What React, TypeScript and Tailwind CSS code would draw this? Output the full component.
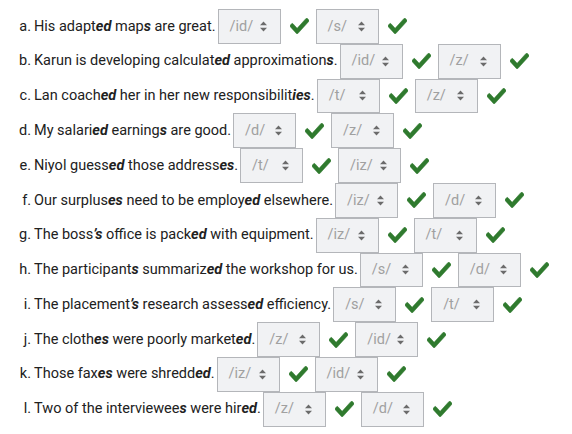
import React from 'react';

type Part = string | { b: string };

interface Row {
  id: string;
  parts: Part[];
  answers: [string, string];
}

const rows: Row[] = [
  { id: 'a', parts: ['His adapt', { b: 'ed' }, ' map', { b: 's' }, ' are great.'], answers: ['/id/', '/s/'] },
  { id: 'b', parts: ['Karun is developing calculat', { b: 'ed' }, ' approximation', { b: 's' }, '.'], answers: ['/id/', '/z/'] },
  { id: 'c', parts: ['Lan coach', { b: 'ed' }, ' her in her new responsibilit', { b: 'ies' }, '.'], answers: ['/t/', '/z/'] },
  { id: 'd', parts: ['My salari', { b: 'ed' }, ' earning', { b: 's' }, ' are good.'], answers: ['/d/', '/z/'] },
  { id: 'e', parts: ['Niyol guess', { b: 'ed' }, ' those address', { b: 'es' }, '.'], answers: ['/t/', '/iz/'] },
  { id: 'f', parts: ['Our surplus', { b: 'es' }, ' need to be employ', { b: 'ed' }, ' elsewhere.'], answers: ['/iz/', '/d/'] },
  { id: 'g', parts: ['The boss', { b: '\u2019s' }, ' office is pack', { b: 'ed' }, ' with equipment.'], answers: ['/iz/', '/t/'] },
  { id: 'h', parts: ['The participant', { b: 's' }, ' summariz', { b: 'ed' }, ' the workshop for us.'], answers: ['/s/', '/d/'] },
  { id: 'i', parts: ['The placement', { b: '\u2019s' }, ' research assess', { b: 'ed' }, ' efficiency.'], answers: ['/s/', '/t/'] },
  { id: 'j', parts: ['The cloth', { b: 'es' }, ' were poorly market', { b: 'ed' }, '.'], answers: ['/z/', '/id/'] },
  { id: 'k', parts: ['Those fax', { b: 'es' }, ' were shredd', { b: 'ed' }, '.'], answers: ['/iz/', '/id/'] },
  { id: 'l', parts: ['Two of the interviewee', { b: 's' }, ' were hir', { b: 'ed' }, '.'], answers: ['/z/', '/d/'] },
];

const SortArrows = () => (
  <svg width="7" height="11" viewBox="0 0 7 11" className="shrink-0">
    <path d="M3.5 0.5 L7 4.3 H0 Z" fill="#6b6b6b" />
    <path d="M3.5 10.5 L7 6.7 H0 Z" fill="#6b6b6b" />
  </svg>
);

const Check = () => (
  <svg width="19" height="16" viewBox="0 62 512 388" preserveAspectRatio="none" className="shrink-0">
    <path
      fill="#2f7a2e"
      stroke="#2f7a2e"
      strokeWidth="14"
      d="M173.898 439.404l-166.4-166.4c-9.997-9.997-9.997-26.206 0-36.204l36.203-36.204c9.997-9.998 26.207-9.998 36.204 0L192 312.69 432.095 72.596c9.997-9.997 26.207-9.997 36.204 0l36.203 36.204c9.997 9.997 9.997 26.206 0 36.204l-294.4 294.401c-9.998 9.997-26.207 9.997-36.204-.001z"
    />
  </svg>
);

const AnswerBox = ({ value }: { value: string }) => (
  <div className="flex h-full w-[63px] shrink-0 items-center justify-between border border-[#b4b6ba] bg-[#f1f2f4] pl-[11px] pr-[13px] text-[#a0a0a0]">
    <span>{value}</span>
    <SortArrows />
  </div>
);

export default function App() {
  return (
    <div
      className="bg-white pt-[9px] text-[14.5px] text-[#212121]"
      style={{ fontFamily: 'Roboto, "Liberation Sans", sans-serif' }}
    >
      {rows.map((row) => (
        <div key={row.id} className="flex h-[34.8px] items-center whitespace-nowrap">
          <span className="w-[31px] shrink-0 text-right">{row.id}.</span>
          <span className="ml-[3px]">
            {row.parts.map((p, i) =>
              typeof p === 'string' ? (
                <React.Fragment key={i}>{p}</React.Fragment>
              ) : (
                <b key={i} className="font-bold italic">
                  {p.b}
                </b>
              )
            )}
          </span>
          <div className="ml-[2px] flex h-full items-center">
            <AnswerBox value={row.answers[0]} />
            <span className="ml-[9px]">
              <Check />
            </span>
            <div className="ml-[7px] h-full">
              <AnswerBox value={row.answers[1]} />
            </div>
            <span className="ml-[9px]">
              <Check />
            </span>
          </div>
        </div>
      ))}
    </div>
  );
}
